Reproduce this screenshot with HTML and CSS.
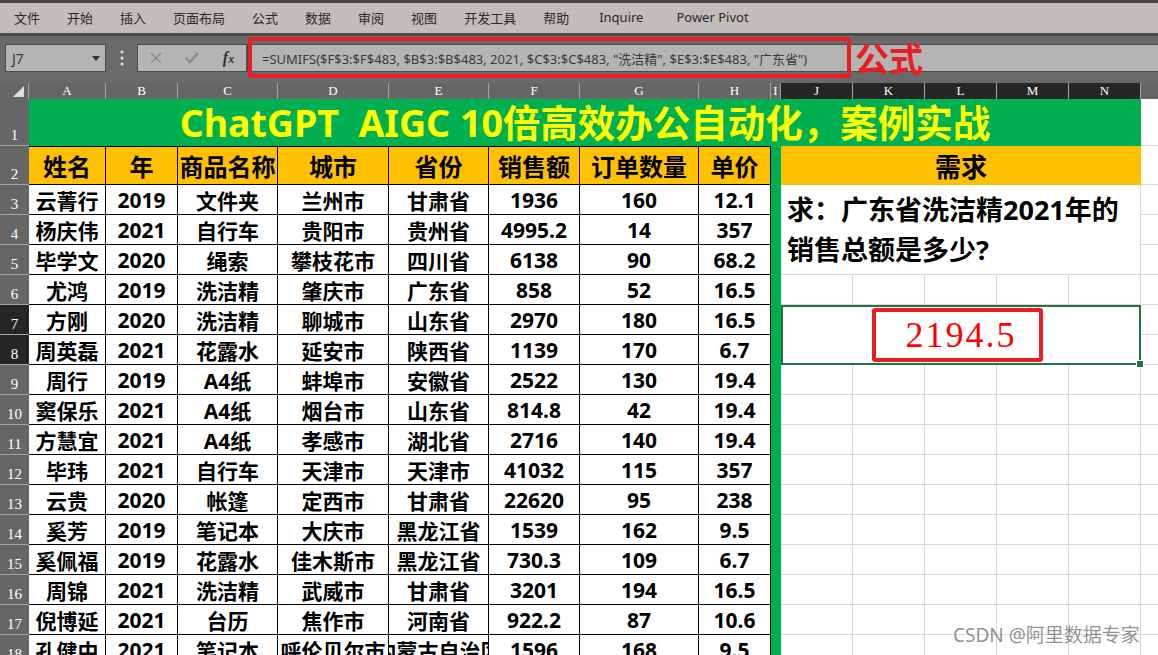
FILE: index.html
```html
<!DOCTYPE html>
<html lang="zh">
<head>
<meta charset="utf-8">
<title>Excel SUMIFS</title>
<link rel="stylesheet" href="styles.css">
</head>
<body>
<div class="topstrip"></div>
<nav class="menubar">
  <span>文件</span><span>开始</span><span>插入</span><span>页面布局</span><span>公式</span><span>数据</span><span>审阅</span><span>视图</span><span>开发工具</span><span>帮助</span><span class="lat">Inquire</span><span class="lat lat2">Power Pivot</span>
</nav>
<div class="fbar">
  <div class="namebox"><span>J7</span><svg width="8" height="5" viewBox="0 0 8 5"><polygon points="0,0 8,0 4,5" fill="#333"/></svg></div>
  <div class="dots"><svg width="4" height="16" viewBox="0 0 4 16"><circle cx="2" cy="2" r="1.5" fill="#e6e6e6"/><circle cx="2" cy="8" r="1.5" fill="#e6e6e6"/><circle cx="2" cy="14" r="1.5" fill="#e6e6e6"/></svg></div>
  <div class="btns">
    <svg width="12" height="12" viewBox="0 0 12 12"><path d="M1 1 L11 11 M11 1 L1 11" stroke="#8a8a8a" stroke-width="1.4"/></svg>
    <svg width="14" height="12" viewBox="0 0 14 12"><path d="M1 6 L5 10 L13 1" stroke="#8a8a8a" stroke-width="2.4" fill="none"/></svg>
    <span class="fx">f<span class="fxx">x</span></span>
  </div>
  <div class="finput">=SUMIFS($F$3:$F$483, $B$3:$B$483, 2021, $C$3:$C$483, "洗洁精", $E$3:$E$483, "广东省")</div>
  <div class="fmark"></div>
  <div class="flabel">公式</div>
</div>
<div class="sheet">
  <div class="ch corner"><svg width="11" height="11" viewBox="0 0 11 11"><polygon points="11,0 11,11 0,11" fill="#e0e0e0"/></svg></div>
  <div class="ch">A</div><div class="ch">B</div><div class="ch">C</div><div class="ch">D</div><div class="ch">E</div><div class="ch">F</div><div class="ch">G</div><div class="ch">H</div><div class="ch">I</div>
  <div class="ch sel">J</div><div class="ch sel">K</div><div class="ch sel">L</div><div class="ch sel">M</div><div class="ch sel">N</div><div class="ch blank"></div>

  <div class="rh">1</div><div class="title">ChatGPT&nbsp; AIGC 10倍高效办公自动化，案例实战</div><div class="o"></div>

  <div class="rh">2</div>
  <div class="hd">姓名</div><div class="hd">年</div><div class="hd">商品名称</div><div class="hd">城市</div><div class="hd">省份</div><div class="hd">销售额</div><div class="hd">订单数量</div><div class="hd">单价</div>
  <div class="gi"></div><div class="need">需求</div><div class="o"></div>

  <div class="rh">3</div>
  <div class="d">云菁行</div><div class="d">2019</div><div class="d">文件夹</div><div class="d">兰州市</div><div class="d">甘肃省</div><div class="d">1936</div><div class="d">160</div><div class="d">12.1</div>
  <div class="gi"></div><div class="q">求：广东省洗洁精2021年的<br>销售总额是多少?</div><div class="o"></div>

  <div class="rh">4</div>
  <div class="d">杨庆伟</div><div class="d">2021</div><div class="d">自行车</div><div class="d">贵阳市</div><div class="d">贵州省</div><div class="d">4995.2</div><div class="d">14</div><div class="d">357</div>
  <div class="gi"></div><div class="o"></div>

  <div class="rh">5</div>
  <div class="d">毕学文</div><div class="d">2020</div><div class="d">绳索</div><div class="d">攀枝花市</div><div class="d">四川省</div><div class="d">6138</div><div class="d">90</div><div class="d">68.2</div>
  <div class="gi"></div><div class="o"></div>

  <div class="rh">6</div>
  <div class="d">尤鸿</div><div class="d">2019</div><div class="d">洗洁精</div><div class="d">肇庆市</div><div class="d">广东省</div><div class="d">858</div><div class="d">52</div><div class="d">16.5</div>
  <div class="gi"></div><div class="g"></div><div class="g"></div><div class="g"></div><div class="g"></div><div class="g"></div><div class="o"></div>

  <div class="rh rsel">7</div>
  <div class="d">方刚</div><div class="d">2020</div><div class="d">洗洁精</div><div class="d">聊城市</div><div class="d">山东省</div><div class="d">2970</div><div class="d">180</div><div class="d">16.5</div>
  <div class="gi"></div><div class="ans"><span class="ansbox">2194.5</span><span class="handle"></span></div><div class="o"></div>

  <div class="rh rsel">8</div>
  <div class="d">周英磊</div><div class="d">2021</div><div class="d">花露水</div><div class="d">延安市</div><div class="d">陕西省</div><div class="d">1139</div><div class="d">170</div><div class="d">6.7</div>
  <div class="gi"></div><div class="o"></div>

  <div class="rh">9</div>
  <div class="d">周行</div><div class="d">2019</div><div class="d">A4纸</div><div class="d">蚌埠市</div><div class="d">安徽省</div><div class="d">2522</div><div class="d">130</div><div class="d">19.4</div>
  <div class="gi"></div><div class="g"></div><div class="g"></div><div class="g"></div><div class="g"></div><div class="g"></div><div class="o"></div>

  <div class="rh">10</div>
  <div class="d">窦保乐</div><div class="d">2021</div><div class="d">A4纸</div><div class="d">烟台市</div><div class="d">山东省</div><div class="d">814.8</div><div class="d">42</div><div class="d">19.4</div>
  <div class="gi"></div><div class="g"></div><div class="g"></div><div class="g"></div><div class="g"></div><div class="g"></div><div class="o"></div>

  <div class="rh">11</div>
  <div class="d">方慧宜</div><div class="d">2021</div><div class="d">A4纸</div><div class="d">孝感市</div><div class="d">湖北省</div><div class="d">2716</div><div class="d">140</div><div class="d">19.4</div>
  <div class="gi"></div><div class="g"></div><div class="g"></div><div class="g"></div><div class="g"></div><div class="g"></div><div class="o"></div>

  <div class="rh">12</div>
  <div class="d">毕玮</div><div class="d">2021</div><div class="d">自行车</div><div class="d">天津市</div><div class="d">天津市</div><div class="d">41032</div><div class="d">115</div><div class="d">357</div>
  <div class="gi"></div><div class="g"></div><div class="g"></div><div class="g"></div><div class="g"></div><div class="g"></div><div class="o"></div>

  <div class="rh">13</div>
  <div class="d">云贵</div><div class="d">2020</div><div class="d">帐篷</div><div class="d">定西市</div><div class="d">甘肃省</div><div class="d">22620</div><div class="d">95</div><div class="d">238</div>
  <div class="gi"></div><div class="g"></div><div class="g"></div><div class="g"></div><div class="g"></div><div class="g"></div><div class="o"></div>

  <div class="rh">14</div>
  <div class="d">奚芳</div><div class="d">2019</div><div class="d">笔记本</div><div class="d">大庆市</div><div class="d">黑龙江省</div><div class="d">1539</div><div class="d">162</div><div class="d">9.5</div>
  <div class="gi"></div><div class="g"></div><div class="g"></div><div class="g"></div><div class="g"></div><div class="g"></div><div class="o"></div>

  <div class="rh">15</div>
  <div class="d">奚佩福</div><div class="d">2019</div><div class="d">花露水</div><div class="d">佳木斯市</div><div class="d">黑龙江省</div><div class="d">730.3</div><div class="d">109</div><div class="d">6.7</div>
  <div class="gi"></div><div class="g"></div><div class="g"></div><div class="g"></div><div class="g"></div><div class="g"></div><div class="o"></div>

  <div class="rh">16</div>
  <div class="d">周锦</div><div class="d">2021</div><div class="d">洗洁精</div><div class="d">武威市</div><div class="d">甘肃省</div><div class="d">3201</div><div class="d">194</div><div class="d">16.5</div>
  <div class="gi"></div><div class="g"></div><div class="g"></div><div class="g"></div><div class="g"></div><div class="g"></div><div class="o"></div>

  <div class="rh">17</div>
  <div class="d">倪博延</div><div class="d">2021</div><div class="d">台历</div><div class="d">焦作市</div><div class="d">河南省</div><div class="d">922.2</div><div class="d">87</div><div class="d">10.6</div>
  <div class="gi"></div><div class="g"></div><div class="g"></div><div class="g"></div><div class="g"></div><div class="g"></div><div class="o"></div>

  <div class="rh">18</div>
  <div class="d">孔健中</div><div class="d">2021</div><div class="d">笔记本</div><div class="d">呼伦贝尔市</div><div class="d">内蒙古自治区</div><div class="d">1596</div><div class="d">168</div><div class="d">9.5</div>
  <div class="gi"></div><div class="g"></div><div class="g"></div><div class="g"></div><div class="g"></div><div class="g"></div><div class="o"></div>
</div>
<div class="watermark">CSDN @阿里数据专家</div>
</body>
</html>
```

FILE: styles.css
```css
* { box-sizing: border-box; margin: 0; padding: 0; }
body {
  width: 1158px;
  height: 655px;
  overflow: hidden;
  background: #fff;
  font-family: "Noto Sans", "Noto Sans CJK SC", sans-serif;
  position: relative;
}
.topstrip { height: 3px; background: #474747; }
.menubar {
  height: 30px;
  background: #c1bdb9;
  display: flex;
  align-items: center;
  gap: 27px;
  padding: 0 0 2px 14px;
  font-family: "Noto Sans CJK SC", sans-serif;
  font-size: 13px;
  color: #2a2a2a;
}
.menubar .lat { font-family: "Noto Sans", sans-serif; margin-left: 3px; }
.menubar .lat2 { margin-left: 6px; }
.fbar {
  height: 50px;
  background: #6a6a6a;
  border-top: 3px solid #4c4c4c;
  display: flex;
  align-items: flex-start;
  padding: 8px 0 0 5px;
  position: relative;
}
.namebox {
  width: 101px;
  height: 28px;
  background: #b4b4b4;
  border: 1px solid #4d4d4d;
  display: flex;
  align-items: center;
  justify-content: space-between;
  padding: 0 5px 0 6px;
  font-family: "Noto Sans", sans-serif;
  font-size: 14px;
  color: #3a3a3a;
}
.dots { width: 31px; height: 28px; display: flex; align-items: center; justify-content: center; }
.btns {
  width: 110px;
  height: 28px;
  background: #b4b4b4;
  border: 1px solid #4d4d4d;
  display: flex;
  align-items: center;
  justify-content: space-around;
}
.fx {
  font-family: "Liberation Serif", serif;
  font-style: italic;
  font-weight: 700;
  font-size: 16px;
  color: #333;
}
.fxx { font-size: 12px; }
.finput {
  flex: 1;
  height: 28px;
  background: #b4b4b4;
  border: 1px solid #4d4d4d;
  border-right: none;
  padding-left: 14px;
  display: flex;
  align-items: center;
  font-family: "Noto Sans", "Noto Sans CJK SC", sans-serif;
  font-size: 13px;
  color: #3a3a3a;
  white-space: nowrap;
  overflow: hidden;
}
.fmark {
  position: absolute;
  left: 248px;
  top: 1px;
  width: 603px;
  height: 41px;
  border: 4px solid #ea1c24;
  border-radius: 3px;
}
.flabel {
  position: absolute;
  left: 855px;
  top: 1px;
  font-family: "Noto Sans CJK SC", sans-serif;
  font-weight: 700;
  font-size: 34px;
  line-height: 42px;
  color: #ea1c24;
}

.sheet {
  display: grid;
  grid-template-columns: 29px 77px 72px 100px 111px 100px 91px 119px 72px 10px repeat(5, 72px) 17px;
  grid-template-rows: 16px 47px 39px repeat(16, 30px);
}
.ch {
  background: #666;
  color: #fff;
  font-family: "Liberation Serif", serif;
  font-size: 13px;
  line-height: 16px;
  display: flex;
  align-items: center;
  justify-content: center;
  border-right: 1px solid #a3a3a3;
  overflow: hidden;
}
.ch.sel { background: #262626; }
.ch.blank { border-right: none; }
.corner { justify-content: flex-end; align-items: flex-end; padding: 0 4px 2px 0; }
.rh {
  background: #666;
  color: #fff;
  font-family: "Liberation Serif", serif;
  font-size: 15px;
  line-height: 15px;
  display: flex;
  align-items: flex-end;
  justify-content: center;
  padding-bottom: 2px;
  border-bottom: 1px solid #a3a3a3;
}
.rh.rsel { background: #262626; }
.title {
  grid-column: span 14;
  background: #00b050;
  color: #ffff00;
  font-weight: 700;
  font-size: 37.5px;
  line-height: 42px;
  display: flex;
  align-items: center;
  justify-content: center;
  white-space: nowrap;
}
.o { border-bottom: 1px solid #d9d9d9; }
.hd {
  background: #ffc000;
  border-top: 1px solid #000;
  border-right: 1px solid #000;
  border-bottom: 1px solid #000;
  font-weight: 700;
  font-size: 24px;
  display: flex;
  align-items: center;
  justify-content: center;
  white-space: nowrap;
  overflow: hidden;
}
.d {
  border-right: 1px solid #000;
  border-bottom: 1px solid #000;
  font-weight: 700;
  font-size: 21px;
  color: #000;
  display: flex;
  align-items: center;
  justify-content: center;
  white-space: nowrap;
  overflow: hidden;
}
.gi { background: #00b050; }
.need {
  grid-column: span 5;
  background: #ffc000;
  font-weight: 700;
  font-size: 26px;
  display: flex;
  align-items: center;
  justify-content: center;
}
.q {
  grid-column: span 5;
  grid-row: span 3;
  padding: 5px 6px 0 6px;
  font-weight: 700;
  font-size: 27px;
  line-height: 40px;
  white-space: nowrap;
  border-right: 1px solid #d9d9d9;
  border-bottom: 1px solid #d9d9d9;
}
.g {
  border-right: 1px solid #d9d9d9;
  border-bottom: 1px solid #d9d9d9;
}
.ans {
  grid-column: span 5;
  grid-row: span 2;
  border: 2px solid #217346;
  display: flex;
  align-items: center;
  justify-content: center;
  position: relative;
}
.ansbox {
  display: inline-block;
  border: 4px solid #ea1c24;
  border-radius: 3px;
  padding: 4px 22px 4px 30px;
  margin-right: 8px;
  font-family: "Liberation Serif", serif;
  font-size: 36px;
  line-height: 38px;
  letter-spacing: 2px;
  color: #ff0000;
}
.handle {
  position: absolute;
  right: -5px;
  bottom: -5px;
  width: 8px;
  height: 8px;
  background: #217346;
  border: 1px solid #fff;
}
.watermark {
  position: absolute;
  left: 953px;
  top: 624px;
  font-family: "Noto Sans", "Noto Sans CJK SC", sans-serif;
  font-size: 19px;
  line-height: 22px;
  color: rgba(110, 110, 110, 0.75);
  white-space: nowrap;
}
```
